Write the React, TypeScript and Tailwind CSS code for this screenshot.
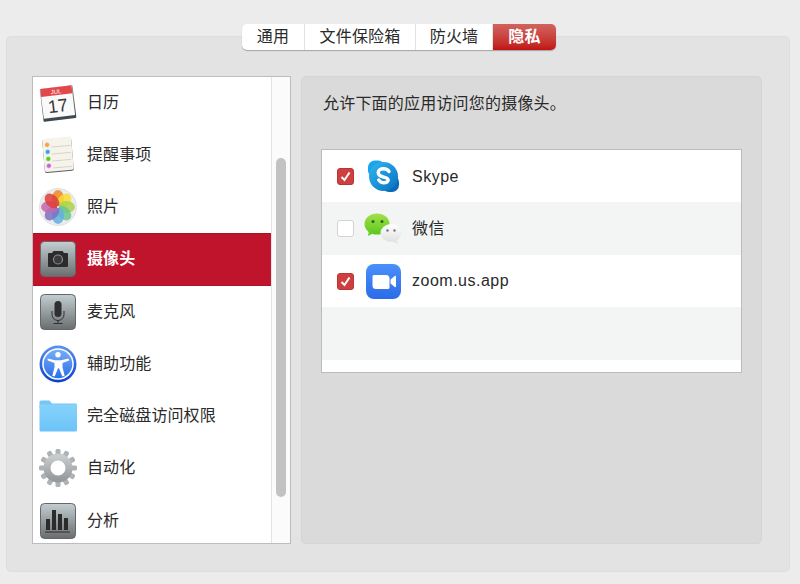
import React from "react";

const font = "font-['Helvetica_Neue','Liberation_Sans','Noto_Sans_CJK_SC',sans-serif]";

const CalendarIcon = () => (
  <svg width="38" height="38" viewBox="0 0 38 38">
    <defs>
      <linearGradient id="calEdge" x1="0" y1="0" x2="0" y2="1">
        <stop offset="0" stopColor="#8f9aa0" />
        <stop offset="1" stopColor="#39464c" />
      </linearGradient>
    </defs>
    <g transform="rotate(-7 19 19)">
      <rect x="2.500" y="3" width="33" height="33" fill="url(#calEdge)" rx="1" />
      <rect x="3" y="3" width="31.500" height="30" fill="#fafafa" />
      <rect x="3" y="3" width="31.500" height="8" fill="#e2474b" />
      <text x="18.500" y="9.500" fontSize="6" fill="#fff" textAnchor="middle" fontFamily="Liberation Sans">JUL</text>
      <text x="18.500" y="28" fontSize="18" fill="#3a3a3a" textAnchor="middle" fontFamily="Liberation Sans">17</text>
    </g>
  </svg>
);

const RemindersIcon = () => (
  <svg width="36" height="38" viewBox="0 0 36 38">
    <g transform="rotate(-5 18 19)">
      <rect x="3.500" y="2.500" width="29" height="33.500" rx="2" fill="#5a5f60" />
      <rect x="3.500" y="1.500" width="29" height="33.500" rx="2" fill="#f5f3ea" />
      {[8, 15, 22, 29].map((y) => (
        <line key={y} x1="12" x2="31" y1={y + 2.500} y2={y + 2.500} stroke="#cfcdc5" strokeWidth="0.8" />
      ))}
      <circle cx="8" cy="8" r="2.400" fill="#f7a04b" stroke="#e8e4d8" strokeWidth="0.6" />
      <circle cx="8" cy="15" r="2.400" fill="#2ea5f8" stroke="#e8e4d8" strokeWidth="0.6" />
      <circle cx="8" cy="22" r="2.400" fill="#4fd414" stroke="#e8e4d8" strokeWidth="0.6" />
      <circle cx="8" cy="29" r="2.400" fill="#c95fe0" stroke="#e8e4d8" strokeWidth="0.6" />
    </g>
  </svg>
);

const PhotosIcon = () => {
  const petals = ["#f08a24", "#f7dc34", "#a9d34a", "#6cc792", "#62aee3", "#7b72c2", "#c766ae", "#dd3e3a"];
  return (
    <svg width="38" height="38" viewBox="0 0 38 38">
      <circle cx="19" cy="19" r="18.500" fill="#ececec" stroke="#d2d2d2" strokeWidth="0.6" />
      {petals.map((c, i) => (
        <ellipse key={c} cx="19" cy="10.500" rx="6" ry="8.500" fill={c} fillOpacity="0.85" transform={`rotate(${i * 45} 19 19)`} />
      ))}
      <circle cx="19" cy="19" r="0.900" fill="#fff" />
    </svg>
  );
};

const GrayTile = ({ children, id }: { children: React.ReactNode; id: string }) => (
  <svg width="36" height="36" viewBox="0 0 36 36">
    <defs>
      <linearGradient id={id} x1="0" y1="0" x2="0" y2="1">
        <stop offset="0" stopColor="#c3ced2" />
        <stop offset="1" stopColor="#6a6d6e" />
      </linearGradient>
    </defs>
    <rect x="0.500" y="0.500" width="35" height="35" rx="4" fill={`url(#${id})`} stroke="#62686a" />
    {children}
  </svg>
);

const CameraIcon = () => (
  <GrayTile id="tileCam">
    <path d="M9 12h3l1.500-2h9l1.500 2h3a1 1 0 0 1 1 1v12a1 1 0 0 1-1 1H9a1 1 0 0 1-1-1V13a1 1 0 0 1 1-1z" fill="#2b2b2b" />
    <circle cx="18" cy="18.500" r="4.500" fill="#3a3a3a" stroke="#868c8f" strokeWidth="1.200" />
  </GrayTile>
);

const MicIcon = () => (
  <GrayTile id="tileMic">
    <rect x="14.500" y="7" width="7" height="16" rx="3.500" fill="#2f2f2f" />
    <path d="M12 17v3.500a6 6 0 0 0 12 0V17M18 26.500v3M13.500 29.500h9" fill="none" stroke="#2f2f2f" strokeWidth="1" />
  </GrayTile>
);

const AccessIcon = () => (
  <svg width="38" height="38" viewBox="0 0 38 38">
    <defs>
      <linearGradient id="accFill" x1="0" y1="0" x2="0" y2="1">
        <stop offset="0" stopColor="#78aef6" />
        <stop offset="1" stopColor="#2a6fe8" />
      </linearGradient>
      <linearGradient id="accRim" x1="0" y1="0" x2="0" y2="1">
        <stop offset="0" stopColor="#5b93ee" />
        <stop offset="1" stopColor="#0a3fd0" />
      </linearGradient>
    </defs>
    <circle cx="19" cy="19" r="18.500" fill="url(#accRim)" />
    <circle cx="19" cy="19" r="15.800" fill="#fff" />
    <circle cx="19" cy="19" r="14.300" fill="url(#accFill)" />
    <circle cx="19" cy="9.800" r="2.700" fill="#fff" />
    <path d="M8.500 13.500l7.500 1.800h6l7.500-1.800.7 2-6.700 2.400v4.300l2.200 8.600-2.400.7-3.300-8.300h-1l-3.300 8.300-2.400-.7 2.200-8.600v-4.300l-6.700-2.400z" fill="#fff" />
  </svg>
);

const FolderIcon = () => (
  <svg width="38" height="32" viewBox="0 0 38 32">
    <defs>
      <linearGradient id="folderFill" x1="0" y1="0" x2="0" y2="1">
        <stop offset="0" stopColor="#85d3fb" />
        <stop offset="1" stopColor="#6cc3f8" />
      </linearGradient>
    </defs>
    <path d="M0.500 8V2A1.500 1.500 0 0 1 2 .5h8.500L13 3.500h23.500A1.500 1.500 0 0 1 38 5v3z" fill="#77c6f5" />
    <rect x="0.500" y="4.500" width="37.500" height="27" rx="1.500" fill="url(#folderFill)" />
  </svg>
);

const GearIcon = () => {
  const teeth = Array.from({ length: 12 }, (_, i) => i * 30);
  return (
    <svg width="40" height="40" viewBox="0 0 40 40">
      <defs>
        <linearGradient id="gearFill" x1="0" y1="0" x2="0" y2="1">
          <stop offset="0" stopColor="#c8cbcd" />
          <stop offset="1" stopColor="#969a9d" />
        </linearGradient>
      </defs>
      {teeth.map((a) => (
        <rect key={a} x="17.500" y="1" width="5" height="8" rx="1.500" fill="#aeb2b5" transform={`rotate(${a} 20 20)`} />
      ))}
      <circle cx="20" cy="20" r="11" fill="none" stroke="url(#gearFill)" strokeWidth="7" />
    </svg>
  );
};

const ChartIcon = () => (
  <GrayTile id="tileChart">
    <rect x="6" y="16" width="4" height="11" fill="#2b2b2b" />
    <rect x="12" y="7" width="4" height="20" fill="#2b2b2b" />
    <rect x="18" y="11" width="4" height="16" fill="#2b2b2b" />
    <rect x="24" y="15" width="4" height="12" fill="#2b2b2b" />
    <rect x="5" y="28.500" width="25" height="1" fill="#2b2b2b" />
  </GrayTile>
);

const SkypeIcon = () => (
  <svg width="33" height="33" viewBox="0 0 33 33">
    <defs>
      <linearGradient id="skypeFill" x1="0" y1="0" x2="1" y2="1">
        <stop offset="0" stopColor="#2fb8f2" />
        <stop offset="1" stopColor="#0a6fc0" />
      </linearGradient>
    </defs>
    <rect x="1" y="0.500" width="17" height="17" rx="7" fill="#1aa5ea" />
    <rect x="15" y="15" width="17" height="17" rx="7" fill="#0a6cb9" />
    <circle cx="16.500" cy="16.500" r="14.500" fill="url(#skypeFill)" />
    <path d="M22 11.500c-1-1.800-3-2.700-5.500-2.700-3.200 0-5.300 1.600-5.300 4 0 5.500 10 3.200 10 7.300 0 1.500-1.700 2.700-4.200 2.700-2.500 0-4.200-1-5.200-2.800" fill="none" stroke="#fff" strokeWidth="3.400" strokeLinecap="round" />
  </svg>
);

const WeChatIcon = () => (
  <svg width="38" height="32" viewBox="0 0 38 32">
    <defs>
      <linearGradient id="wxGreen" x1="0" y1="0" x2="0" y2="1">
        <stop offset="0" stopColor="#a4e04a" />
        <stop offset="1" stopColor="#5cc81e" />
      </linearGradient>
      <linearGradient id="wxWhite" x1="0" y1="0" x2="0" y2="1">
        <stop offset="0" stopColor="#ffffff" />
        <stop offset="1" stopColor="#dfe2df" />
      </linearGradient>
    </defs>
    <ellipse cx="13" cy="11" rx="12.500" ry="10.500" fill="url(#wxGreen)" />
    <path d="M5 17l-1 6 6-3z" fill="#6acd25" />
    <circle cx="9" cy="8.500" r="1.500" fill="#1f6b1b" />
    <circle cx="18" cy="8.500" r="1.500" fill="#1f6b1b" />
    <path d="M32 27l2.500 4-6-2.500z" fill="#dfe2df" />
    <ellipse cx="27" cy="20" rx="10.500" ry="9" fill="url(#wxWhite)" />
    <circle cx="23.500" cy="17.500" r="1.200" fill="#777" />
    <circle cx="30.500" cy="17.500" r="1.200" fill="#777" />
  </svg>
);

const ZoomIcon = () => (
  <svg width="35" height="35" viewBox="0 0 35 35">
    <defs>
      <linearGradient id="zoomFill" x1="0" y1="0" x2="0" y2="1">
        <stop offset="0" stopColor="#4a90fb" />
        <stop offset="1" stopColor="#2b6be8" />
      </linearGradient>
    </defs>
    <rect width="35" height="35" rx="8" fill="url(#zoomFill)" />
    <path d="M6.500 12.500A1.500 1.500 0 0 1 8 11h12a3.500 3.500 0 0 1 3.500 3.500v9a1.500 1.500 0 0 1-1.500 1.500H10a3.500 3.500 0 0 1-3.500-3.500z" fill="#fff" />
    <path d="M24.500 15.500l4.200-3.500c.6-.4 1.300-.2 1.300.5v10c0 .7-.7.900-1.300.5l-4.200-3.500z" fill="#fff" />
  </svg>
);

const categories = [
  { name: "日历", icon: <CalendarIcon /> },
  { name: "提醒事项", icon: <RemindersIcon /> },
  { name: "照片", icon: <PhotosIcon /> },
  { name: "摄像头", icon: <CameraIcon />, active: true },
  { name: "麦克风", icon: <MicIcon /> },
  { name: "辅助功能", icon: <AccessIcon /> },
  { name: "完全磁盘访问权限", icon: <FolderIcon /> },
  { name: "自动化", icon: <GearIcon /> },
  { name: "分析", icon: <ChartIcon /> },
];

const apps = [
  { name: "Skype", icon: <SkypeIcon />, checked: true },
  { name: "微信", icon: <WeChatIcon />, checked: false },
  { name: "zoom.us.app", icon: <ZoomIcon />, checked: true },
];

const tabs = [
  { name: "通用", width: "w-[63px]" },
  { name: "文件保险箱", width: "w-[111px]" },
  { name: "防火墙", width: "w-[77px]" },
];

const Checkbox = ({ checked }: { checked: boolean }) =>
  checked ? (
    <div className="w-[17px] h-[17px] rounded-[3px] bg-[#cf3f3f] border border-[#b93434] flex items-center justify-center">
      <svg width="13" height="13" viewBox="0 0 13 13">
        <path d="M2.500 7l3 3 5-7.500" fill="none" stroke="#fff" strokeWidth="2" />
      </svg>
    </div>
  ) : (
    <div className="w-[17px] h-[17px] rounded-[3px] bg-white border border-[#d3d3d3]" />
  );

export default function App() {
  return (
    <div className={`${font} w-[800px] h-[584px] bg-[#ececec] overflow-hidden pt-[24px] flex flex-col`}>
      {/* tabs sit over the top edge of the panel */}
      <div className="relative z-10 -mb-[14px] ml-[242px] flex h-[26px] w-[314px] rounded-[5px] bg-white shadow-[0_1px_1px_rgba(0,0,0,0.28)] overflow-hidden text-[16px] text-[#2a2a2a] tracking-[0.2px]">
        {tabs.map((t) => (
          <div key={t.name} className={`${t.width} flex items-center justify-center border-r border-[#e2e2e2] last:border-r-0`}>
            {t.name}
          </div>
        ))}
        <div className="w-[63px] flex items-center justify-center text-white font-bold bg-gradient-to-b from-[#d2625f] to-[#c10f12]">
          隐私
        </div>
      </div>

      <div className="ml-[6px] w-[784px] h-[536px] bg-[#e3e3e3] rounded-[5px] border border-[#dddddd] pt-[39px] pl-[25px] flex gap-[10px]">
        <div className="w-[259px] h-[468px] bg-white border border-[#bdbdbd] flex overflow-hidden">
          <div className="w-[238px] -mt-[0.5px] shrink-0 flex flex-col">
            {categories.map((c) => (
              <div
                key={c.name}
                className={`h-[52.25px] shrink-0 flex items-center ${c.active ? "bg-[#c0142c] text-white font-bold border-y border-[#a91326]" : "text-[#2a2a2a]"}`}
              >
                <div className="w-[54px] flex justify-center items-center shrink-0 pr-[4px]">{c.icon}</div>
                <span className="text-[16px] whitespace-nowrap tracking-[0.1px]">{c.name}</span>
              </div>
            ))}
          </div>
          <div className="flex-1 bg-[#fbfbfb] border-l border-[#e4e4e4] pt-[81px] pl-[4px]">
            <div className="w-[10px] h-[339px] rounded-full bg-[#c2c2c2]" />
          </div>
        </div>

        <div className="w-[461px] h-[468px] bg-[#dadada] rounded-[5px] border border-[#d5d5d5] pl-[19px] pr-[19px] flex flex-col">
          <p className="mt-[16px] ml-[2px] h-[24px] leading-[22px] text-[16px] text-[#2a2a2a] tracking-[0.2px]">允许下面的应用访问您的摄像头。</p>
          <div className="mt-[32px] w-[421px] h-[224px] bg-white border border-[#bcbcbc] flex flex-col overflow-hidden">
            {apps.map((a, i) => (
              <div key={a.name} className={`${i === 0 ? "h-[52px]" : "h-[52.5px]"} pt-[1px] shrink-0 flex items-center ${i % 2 === 1 ? "bg-[#f3f5f4]" : "bg-white"}`}>
                <div className="ml-[15px] shrink-0">
                  <Checkbox checked={a.checked} />
                </div>
                <div className="w-[38px] ml-[10px] shrink-0 flex items-center justify-center">{a.icon}</div>
                <span className="ml-[10px] text-[16px] text-[#2a2a2a] tracking-[0.5px]">{a.name}</span>
              </div>
            ))}
            <div className="h-[52.5px] shrink-0 bg-[#f3f5f4]" />
          </div>
        </div>
      </div>
    </div>
  );
}
